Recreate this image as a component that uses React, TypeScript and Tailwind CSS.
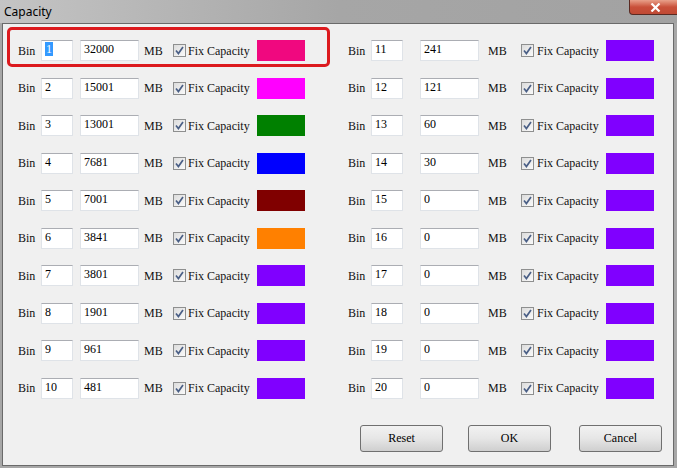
import React from "react";

type Bin = { id: number; mb: number; color: string };

const left: Bin[] = [
  { id: 1, mb: 32000, color: "#f0087f" },
  { id: 2, mb: 15001, color: "#ff00ff" },
  { id: 3, mb: 13001, color: "#008000" },
  { id: 4, mb: 7681, color: "#0000ff" },
  { id: 5, mb: 7001, color: "#800000" },
  { id: 6, mb: 3841, color: "#ff8000" },
  { id: 7, mb: 3801, color: "#8000ff" },
  { id: 8, mb: 1901, color: "#8000ff" },
  { id: 9, mb: 961, color: "#8000ff" },
  { id: 10, mb: 481, color: "#8000ff" },
];

const right: Bin[] = [
  { id: 11, mb: 241, color: "#8000ff" },
  { id: 12, mb: 121, color: "#8000ff" },
  { id: 13, mb: 60, color: "#8000ff" },
  { id: 14, mb: 30, color: "#8000ff" },
  { id: 15, mb: 0, color: "#8000ff" },
  { id: 16, mb: 0, color: "#8000ff" },
  { id: 17, mb: 0, color: "#8000ff" },
  { id: 18, mb: 0, color: "#8000ff" },
  { id: 19, mb: 0, color: "#8000ff" },
  { id: 20, mb: 0, color: "#8000ff" },
];

function Box({ w, children }: { w: string; children: React.ReactNode }) {
  return (
    <div
      className={`${w} h-[21px] bg-white border border-[#dfe3e8] border-t-[#abadb3] pl-[3px] leading-[16px] text-black`}
    >
      {children}
    </div>
  );
}

function Check() {
  return (
    <div className="w-[13px] h-[13px] border border-[#8e8f8f] bg-gradient-to-br from-[#dcdcdc] to-[#fafafa] flex items-center justify-center">
      <svg width="9" height="9" viewBox="0 0 9 9">
        <path
          d="M1 4.5 L3.4 7.5 L8 1"
          fill="none"
          stroke="#4a5f86"
          strokeWidth="1.7"
        />
      </svg>
    </div>
  );
}

function Row({ bin, side }: { bin: Bin; side: "l" | "r" }) {
  const isLeft = side === "l";
  return (
    <div className="flex items-center h-[21px]">
      <span className="w-[23px]">Bin</span>
      <Box w="w-[32px]">
        {bin.id === 1 ? (
          <span className="bg-[#3399ff] text-white px-[1px]">1</span>
        ) : (
          bin.id
        )}
      </Box>
      <div className={isLeft ? "ml-[7px]" : "ml-[17px]"}>
        <Box w="w-[59px]">{bin.mb}</Box>
      </div>
      <span className={isLeft ? "ml-[5px] w-[29px]" : "ml-[9px] w-[33px]"}>MB</span>
      <Check />
      <span className={isLeft ? "ml-[2px] w-[69px]" : "ml-[3px] w-[69px]"}>
        Fix Capacity
      </span>
      <div className="w-[48px] h-[21px]" style={{ backgroundColor: bin.color }} />
    </div>
  );
}

function Btn({ label, className }: { label: string; className?: string }) {
  return (
    <button
      className={`w-[83px] h-[27px] rounded-[3px] border border-[#707070] bg-gradient-to-b from-[#f2f2f2] via-[#e6e6e6] to-[#cfcfcf] text-black font-['Liberation_Serif',serif] ${className ?? ""}`}
    >
      {label}
    </button>
  );
}

export default function App() {
  return (
    <div className="w-[677px] h-[468px] overflow-hidden bg-[#a7a7a7] relative">
      {/* title bar */}
      <div className="h-[23px] flex items-start bg-gradient-to-r from-[#c4c4c4] via-[#a6a6a6] to-[#a2a2a2] relative">
        <span className="ml-[4px] mt-[3px] text-[12px] text-black font-['Noto_Sans',sans-serif]">
          Capacity
        </span>
        <div className="absolute left-[629px] top-0 w-[52px] h-[15px] rounded-b-[4px] border border-[#5a2a22] border-t-0 bg-gradient-to-b from-[#e8a08a] via-[#c9503a] to-[#c04a34] flex items-center justify-center">
          <svg width="11" height="9" viewBox="0 0 11 9">
            <path d="M1.5 0.5 L9.5 8.5 M9.5 0.5 L1.5 8.5" stroke="#fff" strokeWidth="2.2" />
          </svg>
        </div>
      </div>

      {/* client area */}
      <div className="ml-[2px] w-[672px] h-[443px] border border-[#6a6a6a] bg-[#f0f0f0] relative text-[12px] text-[#111] font-['Liberation_Serif',serif]">
        <div className="grid grid-cols-[330px_1fr] pl-[15px] pt-[16px]">
          <div className="flex flex-col gap-y-[16.55px]">
            {left.map((b) => (
              <Row key={b.id} bin={b} side="l" />
            ))}
          </div>
          <div className="flex flex-col gap-y-[16.55px]">
            {right.map((b) => (
              <Row key={b.id} bin={b} side="r" />
            ))}
          </div>
        </div>

        <div className="flex mt-[26px] pl-[357px]">
          <Btn label="Reset" />
          <Btn label="OK" className="ml-[25px]" />
          <Btn label="Cancel" className="ml-[28px]" />
        </div>

        {/* highlight annotation */}
        <div className="absolute left-[4px] top-[3px] w-[323px] h-[40px] border-[3px] border-[#dc1a1e] rounded-[5px] pointer-events-none" />
      </div>
    </div>
  );
}
